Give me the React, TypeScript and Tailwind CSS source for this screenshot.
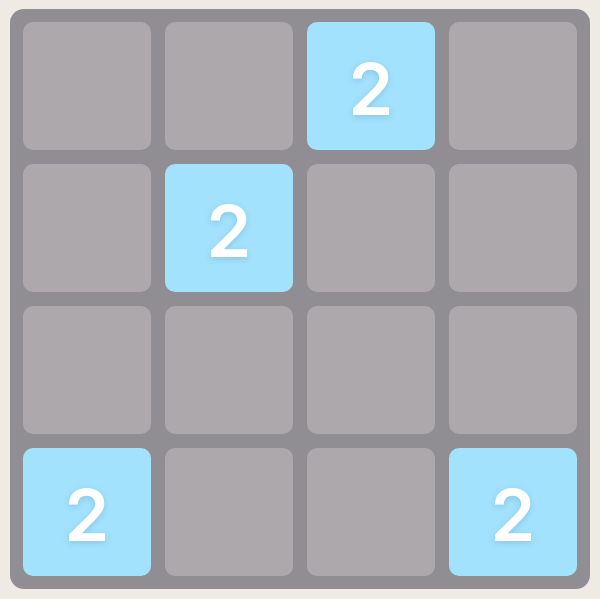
const board = [
  [0, 0, 2, 0],
  [0, 2, 0, 0],
  [0, 0, 0, 0],
  [2, 0, 0, 2],
];

function Tile({ value }: { value: number }) {
  if (!value) {
    return <div className="h-[128px] w-[128px] rounded-[10px] bg-[#aca8ab]" />;
  }
  return (
    <div className="flex h-[128px] w-[128px] items-center justify-center rounded-[10px] bg-[#a3e2fd]">
      <span
        className="pt-[5px] text-[72px] leading-none font-semibold text-white [text-shadow:0_2px_6px_rgba(90,150,190,0.35)]"
        style={{ fontFamily: "Inter, 'Noto Sans', sans-serif" }}
      >
        {value}
      </span>
    </div>
  );
}

export default function App() {
  return (
    <div className="h-[599px] w-[600px] bg-[#efeae4] pt-[9px] pl-[10px]">
      <div className="grid w-[580px] grid-cols-4 gap-[14px] rounded-[14px] bg-[#908e93] p-[13px]">
        {board.flat().map((v, i) => (
          <Tile key={i} value={v} />
        ))}
      </div>
    </div>
  );
}
